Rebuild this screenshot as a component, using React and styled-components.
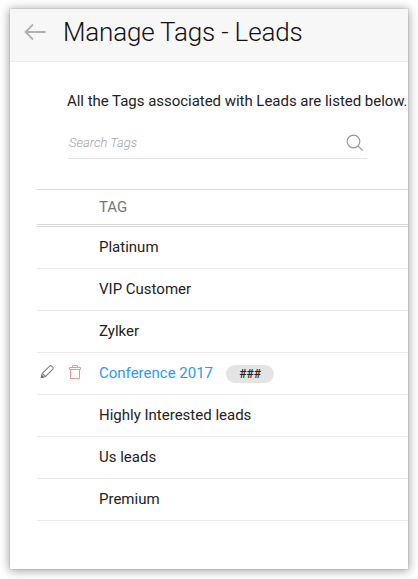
import React from "react";
import styled, { createGlobalStyle } from "styled-components";

const GlobalStyle = createGlobalStyle`
  * {
    box-sizing: border-box;
  }
  body {
    margin: 0;
    background: #fff;
    font-family: Roboto, "Liberation Sans", sans-serif;
    color: #222;
  }
`;

const Page = styled.div`
  height: 579px;
  padding: 9px 9px 9px 10px;
  overflow: hidden;
`;

const Panel = styled.main`
  width: 398px;
  height: 560px;
  background: #fff;
  box-shadow: 0 0 0 1px rgba(0, 0, 0, 0.06), 0 1px 9px 1px rgba(0, 0, 0, 0.36);
  overflow: hidden;
`;

const Header = styled.header`
  display: flex;
  align-items: center;
  height: 53px;
  padding: 0 0 7px 14px;
  background: #f7f7f7;
  border-bottom: 1px solid #ebebeb;
`;

const Title = styled.h1`
  margin: 0 0 0 16px;
  font-size: 26px;
  font-weight: 300;
  line-height: 32px;
  letter-spacing: -0.18px;
  white-space: nowrap;
  color: #111;
`;

const Intro = styled.p`
  margin: 0;
  padding: 29px 0 0 57px;
  font-size: 15px;
  line-height: 20px;
  letter-spacing: -0.03px;
  white-space: nowrap;
`;

const SearchBox = styled.div`
  display: flex;
  align-items: center;
  justify-content: space-between;
  width: 299px;
  height: 32px;
  margin: 16px 0 0 58px;
  padding: 0 3px 0 1px;
  border-bottom: 1px solid #e6e6e6;
`;

const Placeholder = styled.span`
  font-size: 13px;
  font-style: italic;
  font-weight: 300;
  color: #a3a3a3;
`;

const Table = styled.section`
  margin: 30px 0 0 27px;
  border-top: 1px solid #dcdcdc;
`;

const TableHead = styled.div`
  height: 37px;
  padding-left: 62px;
  font-size: 15px;
  line-height: 34px;
  color: #777;
  border-bottom: 3px double #d8d8d8;
`;

const Row = styled.div`
  display: flex;
  align-items: center;
  height: 42px;
  padding-bottom: 2px;
  border-bottom: 1px solid #ebebeb;
`;

const Actions = styled.div`
  display: flex;
  align-items: center;
  flex: none;
  width: 62px;
  height: 18px;
  gap: 14px;
  padding: 0 0 2px 3px;
`;

const TagName = styled.span`
  font-size: 15px;
  line-height: 20px;
  color: ${({ $active }) => ($active ? "#3199e8" : "#222")};
`;

const Count = styled.span`
  width: 48px;
  height: 18px;
  margin: 2px 0 0 13px;
  border-radius: 9px;
  background: #e4e4e4;
  font-size: 12px;
  font-weight: 500;
  line-height: 18px;
  text-align: center;
`;

const tags = [
  { name: "Platinum" },
  { name: "VIP Customer" },
  { name: "Zylker" },
  { name: "Conference 2017", active: true, count: "###" },
  { name: "Highly Interested leads" },
  { name: "Us leads" },
  { name: "Premium" },
];

function BackIcon() {
  return (
    <svg width="23" height="18" viewBox="0 0 23 18" fill="none" stroke="#b0b0b0" strokeWidth="1.8">
      <path d="M21.5 9H1.5M9 1.5L1.5 9L9 16.5" />
    </svg>
  );
}

function SearchIcon() {
  return (
    <svg width="18" height="18" viewBox="0 0 18 18" fill="none" stroke="#999" strokeWidth="1.2">
      <circle cx="7.5" cy="7.5" r="6.3" />
      <path d="M12 12L16.8 16.6" />
    </svg>
  );
}

function EditIcon() {
  return (
    <svg width="15" height="15" viewBox="0 0 15 15" fill="none" stroke="#808080" strokeWidth="1.1">
      <path d="M1.2 13.6L2.3 9.4L9.4 2.3Q10.6 1.1 11.7 2.1L12.8 3.2Q13.8 4.3 12.7 5.4L5.5 12.5Z" />
      <path d="M2.3 9.4L5.5 12.5" />
      <path d="M.8 14L1.6 10.8L4.3 13.2Z" fill="#666" stroke="none" />
    </svg>
  );
}

function TrashIcon() {
  return (
    <svg width="12" height="14" viewBox="0 0 12 14" fill="none" stroke="#f29590" strokeWidth="1">
      <path d="M.5 4.5V2.5H11.5V4.5ZM3.5 2.5V.5H8.5V2.5M1.5 4.5V13.5H10.5V4.5" />
    </svg>
  );
}

function TagRow({ tag }) {
  return (
    <Row>
      <Actions>
        {tag.active && (
          <>
            <EditIcon />
            <TrashIcon />
          </>
        )}
      </Actions>
      <TagName $active={tag.active}>{tag.name}</TagName>
      {tag.count && <Count>{tag.count}</Count>}
    </Row>
  );
}

function App() {
  return (
    <>
      <GlobalStyle />
      <Page>
        <Panel>
          <Header>
            <BackIcon />
            <Title>Manage Tags - Leads</Title>
          </Header>
          <Intro>All the Tags associated with Leads are listed below.</Intro>
          <SearchBox>
            <Placeholder>Search Tags</Placeholder>
            <SearchIcon />
          </SearchBox>
          <Table>
            <TableHead>TAG</TableHead>
            {tags.map((tag) => (
              <TagRow key={tag.name} tag={tag} />
            ))}
          </Table>
        </Panel>
      </Page>
    </>
  );
}

export default App;
